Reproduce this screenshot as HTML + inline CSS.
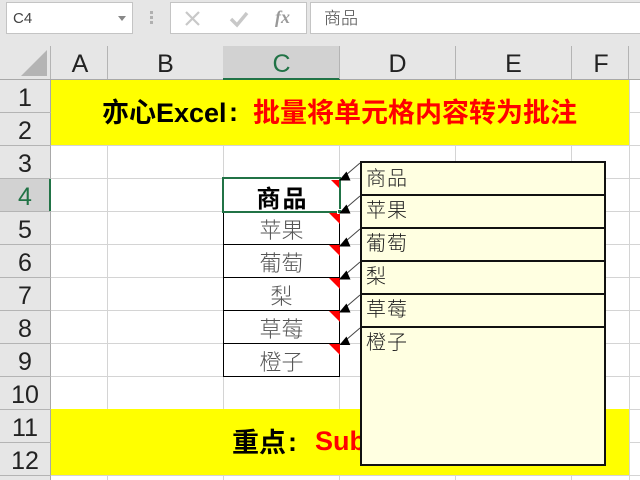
<!DOCTYPE html>
<html><head><meta charset="utf-8">
<style>
html,body{margin:0;padding:0;background:#fff}
#p{position:relative;width:640px;height:480px;overflow:hidden;background:#fff;font-family:"Liberation Sans","Noto Sans CJK SC",sans-serif}
#p div{position:absolute;box-sizing:border-box}
.t{white-space:nowrap;line-height:1}
.ch{top:46px;height:33px;text-align:center;font-size:25px;line-height:36px;color:#222}
.rh{left:0;width:50px;height:33px;text-align:center;font-size:25px;line-height:36px;color:#222}
.v{top:80px;width:1px;height:400px;background:#d4d4d4}
.h{left:51px;width:589px;height:1px;background:#d4d4d4}
.hs{left:0;width:51px;height:1px;background:#b4b4b4}
.vs{top:46px;width:1px;height:33px;background:#b4b4b4}
.cell{left:224px;width:115px;height:32px;text-align:center;font-size:22px;line-height:33px;color:#555;font-family:"Noto Sans CJK SC",sans-serif;font-weight:300}
.tri{width:0;height:0;border-top:11px solid #f00;border-left:11px solid transparent}
.cm{left:366px;font-size:20px;color:#222;line-height:24px;font-family:"Noto Sans CJK SC",sans-serif;font-weight:300;letter-spacing:1px}
.cl{left:361px;width:244px;height:2px;background:#111}
.b{font-size:27px;font-weight:bold;font-family:'Noto Sans CJK SC',sans-serif;line-height:30px}
</style></head><body><div id="p">
<div style="left:0;top:0;width:640px;height:80px;background:#e6e6e6"></div>
<div style="left:6px;top:2px;width:127px;height:32px;background:#fff;border:1px solid #c4c4c4"></div>
<div class="t" style="left:13px;top:11px;font-size:15px;color:#444">C4</div>
<div style="left:118px;top:16px;width:0;height:0;border-top:5px solid #888;border-left:4px solid transparent;border-right:4px solid transparent"></div>
<div style="left:150px;top:11px;width:3px;height:3px;background:#b0b0b0"></div>
<div style="left:150px;top:16px;width:3px;height:3px;background:#b0b0b0"></div>
<div style="left:150px;top:21px;width:3px;height:3px;background:#b0b0b0"></div>
<div style="left:170px;top:2px;width:137px;height:32px;background:#fff;border:1px solid #c4c4c4"></div>
<div style="left:310px;top:2px;width:330px;height:32px;background:#fff;border:1px solid #c4c4c4;border-right:0"></div>
<svg style="position:absolute;left:0;top:0" width="640" height="80">
<path d="M186 12 L199 25 M199 12 L186 25" stroke="#c8c8c8" stroke-width="2.2" fill="none"/>
<path d="M231 19 L237 25 L247 13" stroke="#c8c8c8" stroke-width="3.4" fill="none"/>
<path d="M21 76 L47 76 L47 50 Z" fill="#b4b4b4"/>
</svg>
<div class="t" style="left:275px;top:8px;font-family:'Liberation Serif',serif;font-style:italic;font-weight:bold;font-size:18px;color:#999">fx</div>
<div class="t" style="left:324px;top:8px;font-size:17px;color:#444;font-family:'Noto Sans CJK SC',sans-serif;font-weight:300">商品</div>

<div style="left:223px;top:46px;width:116px;height:33px;background:#d2d2d2"></div>
<div style="left:0;top:79px;width:640px;height:1px;background:#a8a8a8"></div>
<div style="left:223px;top:78px;width:117px;height:2px;background:#217346"></div>
<div class="vs" style="left:50px"></div><div class="vs" style="left:107px"></div><div class="vs" style="left:339px"></div><div class="vs" style="left:455px"></div><div class="vs" style="left:571px"></div><div class="vs" style="left:628px"></div>
<div class="ch" style="left:52px;width:56px">A</div>
<div class="ch" style="left:108px;width:115px">B</div>
<div class="ch" style="left:224px;width:115px;color:#217346">C</div>
<div class="ch" style="left:340px;width:115px">D</div>
<div class="ch" style="left:456px;width:115px">E</div>
<div class="ch" style="left:573px;width:56px">F</div>

<div style="left:0;top:80px;width:51px;height:400px;background:#e6e6e6"></div>
<div style="left:0;top:179px;width:50px;height:33px;background:#d2d2d2"></div>
<div style="left:50px;top:80px;width:1px;height:400px;background:#a8a8a8"></div>
<div style="left:49px;top:178px;width:2px;height:34px;background:#217346"></div>
<div class="hs" style="top:112px"></div><div class="hs" style="top:145px"></div><div class="hs" style="top:178px"></div><div class="hs" style="top:211px"></div><div class="hs" style="top:244px"></div><div class="hs" style="top:277px"></div><div class="hs" style="top:310px"></div><div class="hs" style="top:343px"></div><div class="hs" style="top:376px"></div><div class="hs" style="top:409px"></div><div class="hs" style="top:442px"></div><div class="hs" style="top:475px"></div>
<div class="rh" style="top:80px">1</div><div class="rh" style="top:113px">2</div><div class="rh" style="top:146px">3</div><div class="rh" style="top:179px;color:#217346">4</div><div class="rh" style="top:212px">5</div><div class="rh" style="top:245px">6</div><div class="rh" style="top:278px">7</div><div class="rh" style="top:311px">8</div><div class="rh" style="top:344px">9</div><div class="rh" style="top:377px">10</div><div class="rh" style="top:410px">11</div><div class="rh" style="top:443px">12</div>

<div class="v" style="left:107px"></div><div class="v" style="left:223px"></div><div class="v" style="left:339px"></div><div class="v" style="left:455px"></div><div class="v" style="left:571px"></div><div class="v" style="left:629px"></div>
<div class="h" style="top:112px"></div><div class="h" style="top:145px"></div><div class="h" style="top:178px"></div><div class="h" style="top:211px"></div><div class="h" style="top:244px"></div><div class="h" style="top:277px"></div><div class="h" style="top:310px"></div><div class="h" style="top:343px"></div><div class="h" style="top:376px"></div><div class="h" style="top:409px"></div><div class="h" style="top:442px"></div><div class="h" style="top:475px"></div>

<div style="left:51px;top:80px;width:578px;height:65px;background:#ff0"></div>
<div style="left:51px;top:409px;width:578px;height:66px;background:#ff0"></div>
<div class="t b" style="left:102px;top:96px;color:#000">亦心<span style="font-family:'Liberation Sans'">Excel</span></div>
<div class="t" style="left:229px;top:97px;font-size:27px;font-weight:bold;line-height:30px;color:#000">:</div>
<div class="t b" style="left:253px;top:96px;color:#f00">批量将单元格内容转为批注</div>
<div class="t b" style="left:232px;top:426px;color:#000">重点</div>
<div class="t" style="left:288px;top:427px;font-size:27px;font-weight:bold;line-height:30px;color:#000">:</div>
<div class="t" style="left:315px;top:426px;font-size:27px;font-weight:bold;line-height:30px;color:#f00">Sub</div>

<div style="left:223px;top:178px;width:117px;height:199px;background:#fff;border:1px solid #000"></div>
<div style="left:224px;top:244px;width:115px;height:1px;background:#000"></div>
<div style="left:224px;top:277px;width:115px;height:1px;background:#000"></div>
<div style="left:224px;top:310px;width:115px;height:1px;background:#000"></div>
<div style="left:224px;top:343px;width:115px;height:1px;background:#000"></div>
<div class="cell" style="top:180px;color:#000;font-weight:bold;font-size:24px;letter-spacing:2px;line-height:33px;left:225px">商品</div>
<div class="cell" style="top:213px">苹果</div>
<div class="cell" style="top:246px">葡萄</div>
<div class="cell" style="top:279px">梨</div>
<div class="cell" style="top:312px">草莓</div>
<div class="cell" style="top:345px">橙子</div>
<div class="tri" style="left:329px;top:213px"></div>
<div class="tri" style="left:329px;top:245px"></div>
<div class="tri" style="left:329px;top:278px"></div>
<div class="tri" style="left:329px;top:311px"></div>
<div class="tri" style="left:329px;top:344px"></div>
<div style="left:222px;top:177px;width:119px;height:36px;border:2px solid #217346"></div>
<div class="tri" style="left:331px;top:180px;border-top-width:8px;border-left-width:8px"></div>
<div style="left:337px;top:209px;width:5px;height:5px;background:#217346;border:1px solid #fff"></div>

<div style="left:360px;top:161px;width:246px;height:305px;background:#ffffe1;border:2px solid #111"></div>
<div class="cl" style="top:194px"></div><div class="cl" style="top:227px"></div><div class="cl" style="top:260px"></div><div class="cl" style="top:293px"></div><div class="cl" style="top:326px"></div>
<div class="cm" style="top:165px">商品</div>
<div class="cm" style="top:197px">苹果</div>
<div class="cm" style="top:230px">葡萄</div>
<div class="cm" style="top:263px">梨</div>
<div class="cm" style="top:296px">草莓</div>
<div class="cm" style="top:329px">橙子</div>

<svg style="position:absolute;left:330px;top:155px" width="35" height="190" viewBox="330 155 35 190">
<g stroke="#444" stroke-width="1" fill="none">
<path d="M360 163 L346 175"/><path d="M360 196 L346 208"/><path d="M360 229 L346 241"/><path d="M360 262 L346 274"/><path d="M360 295 L346 307"/><path d="M360 328 L346 340"/>
</g>
<g fill="#000">
<path d="M339 180.5 L346.5 171.5 L350.5 180.5 Z"/><path d="M339 213.5 L346.5 204.5 L350.5 213.5 Z"/><path d="M339 246.5 L346.5 237.5 L350.5 246.5 Z"/><path d="M339 279.5 L346.5 270.5 L350.5 279.5 Z"/><path d="M339 312.5 L346.5 303.5 L350.5 312.5 Z"/><path d="M339 345.5 L346.5 336.5 L350.5 345.5 Z"/>
</g>
</svg>
</div></body></html>
